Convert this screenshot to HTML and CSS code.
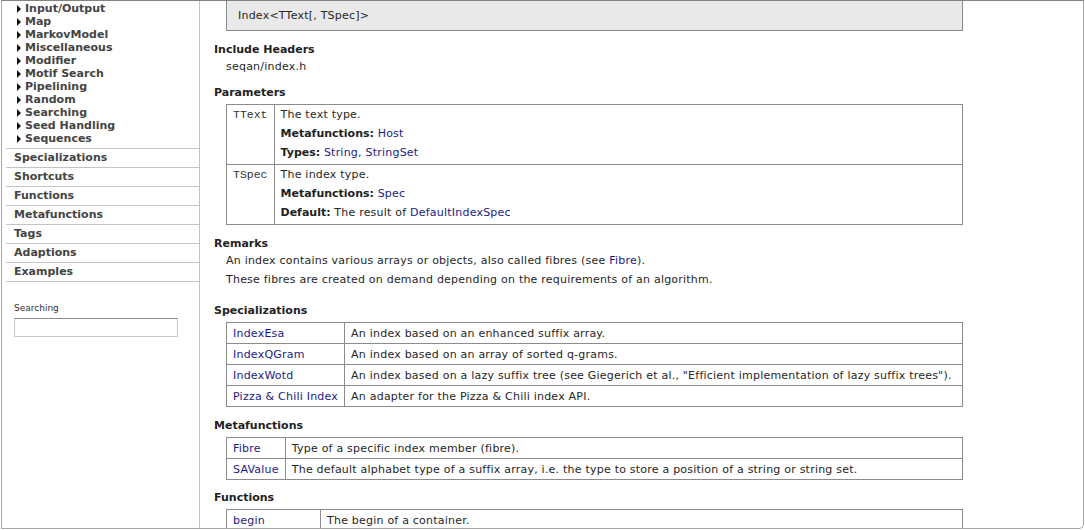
FILE: index.html
```html
<!DOCTYPE html>
<html>
<head>
<meta charset="utf-8">
<title>Index - SeqAn</title>
<link rel="stylesheet" href="styles.css">
</head>
<body>
<div class="window">
  <aside class="sidebar">
    <ul class="tree">
      <li>Input/Output</li>
      <li>Map</li>
      <li>MarkovModel</li>
      <li>Miscellaneous</li>
      <li>Modifier</li>
      <li>Motif Search</li>
      <li>Pipelining</li>
      <li>Random</li>
      <li>Searching</li>
      <li>Seed Handling</li>
      <li>Sequences</li>
    </ul>
    <ul class="nav">
      <li>Specializations</li>
      <li>Shortcuts</li>
      <li>Functions</li>
      <li>Metafunctions</li>
      <li>Tags</li>
      <li>Adaptions</li>
      <li>Examples</li>
    </ul>
    <div class="search">
      <label class="search-label" for="q">Searching</label>
      <input class="search-input" id="q" type="text">
    </div>
  </aside>
  <main class="main">
    <div class="signature">Index&lt;TText[, TSpec]&gt;</div>

    <section class="section">
      <h2 class="heading">Include Headers</h2>
      <div class="include">seqan/index.h</div>
    </section>

    <section class="section">
      <h2 class="heading">Parameters</h2>
      <table class="table params">
        <tr>
          <td class="pname">TText</td>
          <td class="pdesc">
            <div class="line">The text type.</div>
            <div class="line"><b>Metafunctions:</b> <a href="#">Host</a></div>
            <div class="line"><b>Types:</b> <a href="#">String</a>, <a href="#">StringSet</a></div>
          </td>
        </tr>
        <tr>
          <td class="pname">TSpec</td>
          <td class="pdesc">
            <div class="line">The index type.</div>
            <div class="line"><b>Metafunctions:</b> <a href="#">Spec</a></div>
            <div class="line"><b>Default:</b> The result of <a href="#">DefaultIndexSpec</a></div>
          </td>
        </tr>
      </table>
    </section>

    <section class="section">
      <h2 class="heading">Remarks</h2>
      <div class="remarks">
        <p class="remark">An index contains various arrays or objects, also called fibres (see <a href="#">Fibre</a>).</p>
        <p class="remark">These fibres are created on demand depending on the requirements of an algorithm.</p>
      </div>
    </section>

    <section class="section">
      <h2 class="heading">Specializations</h2>
      <table class="table list">
        <tr><td class="key"><a href="#">IndexEsa</a></td><td class="val">An index based on an enhanced suffix array.</td></tr>
        <tr><td class="key"><a href="#">IndexQGram</a></td><td class="val">An index based on an array of sorted q-grams.</td></tr>
        <tr><td class="key"><a href="#">IndexWotd</a></td><td class="val">An index based on a lazy suffix tree (see Giegerich et al., "Efficient implementation of lazy suffix trees").</td></tr>
        <tr><td class="key"><a href="#">Pizza &amp; Chili Index</a></td><td class="val">An adapter for the Pizza &amp; Chili index API.</td></tr>
      </table>
    </section>

    <section class="section">
      <h2 class="heading">Metafunctions</h2>
      <table class="table list">
        <tr><td class="key"><a href="#">Fibre</a></td><td class="val">Type of a specific index member (fibre).</td></tr>
        <tr><td class="key"><a href="#">SAValue</a></td><td class="val">The default alphabet type of a suffix array, i.e. the type to store a position of a string or string set.</td></tr>
      </table>
    </section>

    <section class="section section-tight">
      <h2 class="heading">Functions</h2>
      <table class="table list">
        <tr><td class="key key-functions"><a href="#">begin</a></td><td class="val">The begin of a container.</td></tr>
      </table>
    </section>
  </main>
</div>
</body>
</html>
```

FILE: styles.css
```css
html, body {
  margin: 0;
  padding: 0;
  background: #fff;
}

body {
  font-family: "DejaVu Sans", Verdana, sans-serif;
  font-size: 11px;
  color: #262626;
  overflow: hidden;
}

.window {
  margin-left: 1px;
  width: 1083px;
  height: 529px;
  box-sizing: border-box;
  border: 1px solid #a8a8a8;
  border-top-color: #828282;
  border-bottom-right-radius: 5px;
  display: flex;
  overflow: hidden;
}

/* ---------- sidebar ---------- */
.sidebar {
  flex: 0 0 198px;
  box-sizing: border-box;
  border-right: 1px solid #c4c4c4;
  height: 100%;
}

.tree {
  list-style: none;
  margin: 0;
  padding: 1px 0 0 15px;
}

.tree li {
  height: 13px;
  line-height: 13px;
  font-weight: bold;
  color: #444;
  display: flex;
  align-items: center;
}

.tree li::before {
  content: "";
  width: 0;
  height: 0;
  border-left: 4px solid #111;
  border-top: 4px solid transparent;
  border-bottom: 4px solid transparent;
  margin-right: 4px;
}

.nav {
  list-style: none;
  margin: 3px 0 0 4px;
  padding: 0;
  border-bottom: 1px solid #c4c4c4;
}

.nav li {
  border-top: 1px solid #c4c4c4;
  height: 18px;
  line-height: 18px;
  padding-left: 8px;
  font-weight: bold;
  color: #444;
}

.search {
  padding: 19px 0 0 12px;
  display: flex;
  flex-direction: column;
}

.search-label {
  font-size: 9px;
  line-height: 14px;
  color: #333;
}

.search-input {
  margin: 3px 0 0;
  width: 164px;
  height: 19px;
  box-sizing: border-box;
  border: 1px solid #c8c8c8;
  border-top-color: #8a8a8a;
  background: #fff;
  padding: 0 3px;
  font: 11px "DejaVu Sans", sans-serif;
}

/* ---------- main ---------- */
.main {
  flex: 0 0 auto;
  padding-left: 14px;
  width: 763px;
  letter-spacing: 0.22px;
}

.signature {
  margin-left: 12px;
  width: 737px;
  box-sizing: border-box;
  height: 30px;
  border: 1px solid #8a8a8a;
  border-top: none;
  background: #e9e9e9;
  padding-left: 11px;
  line-height: 29px;
  color: #262626;
}

.section {
  margin-top: 9px;
}

.section-tight {
  margin-top: 8px;
}

.heading {
  margin: 0;
  padding-top: 1px;
  font-size: 11px;
  font-weight: bold;
  line-height: 18px;
  color: #222;
  letter-spacing: 0;
}

.include {
  margin-left: 12px;
  line-height: 15px;
}

a {
  color: #1a1a86;
  text-decoration: none;
}

b {
  color: #222;
  letter-spacing: 0;
}

.table {
  margin: 2px 0 0 12px;
  width: 737px;
  border-collapse: collapse;
}

.table td {
  border: 1px solid #8c8c8c;
  vertical-align: top;
  padding: 1px 6px 0;
  line-height: 19px;
}

.params td {
  padding: 0 6px 2px;
}

.pname {
  width: 1%;
  white-space: nowrap;
  font-family: "Liberation Mono", "Courier New", monospace;
  font-size: 11.5px;
  letter-spacing: 0;
  color: #333;
}

.pname, .pdesc .line {
  line-height: 19px;
}

.key {
  width: 1%;
  white-space: nowrap;
}

.key-functions {
  width: 81px;
}

.remarks {
  margin-left: 12px;
  padding-bottom: 1px;
}

.remark {
  margin: 0 0 3px;
  line-height: 16px;
}
```
